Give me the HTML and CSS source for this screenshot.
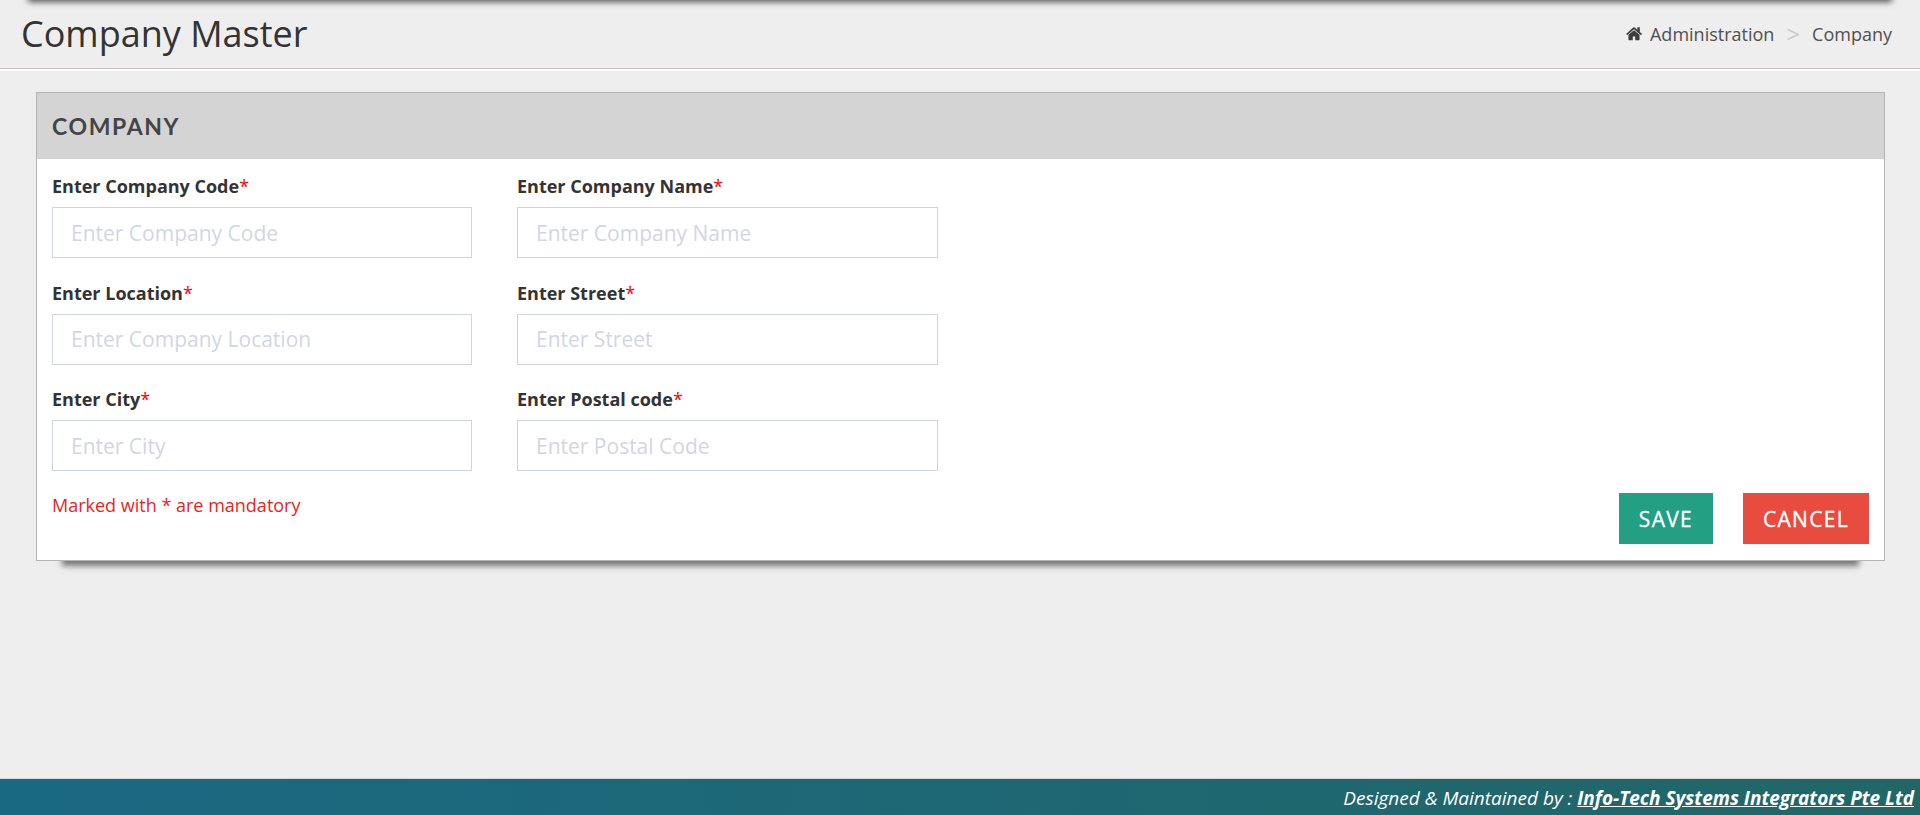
FILE: index.html
```html
<!DOCTYPE html>
<html lang="en">
<head>
<meta charset="utf-8">
<title>Company Master</title>
<link rel="stylesheet" href="styles.css">
</head>
<body>
<div class="topbar"></div>
<header class="page-head">
  <h1 class="page-title">Company Master</h1>
  <nav class="crumbs">
    <svg class="home" viewBox="0 0 1664 1408" aria-hidden="true"><path d="M1408 800v480q0 26-19 45t-45 19H960V960H704v384H320q-26 0-45-19t-19-45V800q0-1 .5-3t.5-3l575-474 575 474q1 2 1 6zm223-69-62 74q-8 9-21 11h-3q-13 0-21-7L832 200 140 809q-12 8-24 7-13-2-21-11l-62-74q-8-10-7-23.500t11-21.500L756 27q32-27 76-27t76 27l272 226V37q0-14 9-23t23-9h192q14 0 23 9t9 23v456l219 182q10 8 11 21.500t-7 23.500z"/></svg>
    <span>Administration</span>
    <span class="sep">&gt;</span>
    <span>Company</span>
  </nav>
</header>
<main class="content">
  <section class="panel">
    <h2 class="panel-head">COMPANY</h2>
    <form class="panel-body">
      <div class="fields">
        <div class="field"><label>Enter Company Code<i>*</i></label><input placeholder="Enter Company Code"></div>
        <div class="field"><label>Enter Company Name<i>*</i></label><input placeholder="Enter Company Name"></div>
        <div class="field"><label>Enter Location<i>*</i></label><input placeholder="Enter Company Location"></div>
        <div class="field"><label>Enter Street<i>*</i></label><input placeholder="Enter Street"></div>
        <div class="field"><label>Enter City<i>*</i></label><input placeholder="Enter City"></div>
        <div class="field"><label>Enter Postal code<i>*</i></label><input placeholder="Enter Postal Code"></div>
      </div>
      <div class="form-foot">
        <p class="note">Marked with * are mandatory</p>
        <div class="actions">
          <button type="button" class="btn save">SAVE</button>
          <button type="button" class="btn cancel">CANCEL</button>
        </div>
      </div>
    </form>
  </section>
</main>
<footer class="site-foot">
  <em>Designed &amp; Maintained by : <a href="#">Info-Tech Systems Integrators Pte Ltd</a></em>
</footer>
</body>
</html>
```
FILE: styles.css
```css
* { box-sizing: border-box; }
html, body { height: 100%; }
body {
  margin: 0;
  background: #eeeeee;
  color: #333;
  font-family: "Open Sans", sans-serif;
  display: flex;
  flex-direction: column;
  overflow: hidden;
  position: relative;
}
.topbar {
  position: absolute;
  top: -10px;
  left: 28px;
  right: 28px;
  height: 10px;
  box-shadow: 0 2px 6px 0 #555;
  background: #555;
}
.page-head {
  height: 69px;
  flex: none;
  display: flex;
  align-items: center;
  justify-content: space-between;
  padding: 0 28px 0 21px;
  border-bottom: 1px solid #c9bfbb;
  box-shadow: 0 2px 0 #fff;
}
.page-title {
  margin: 0;
  font-size: 36px;
  font-weight: 400;
  line-height: 1;
  color: #333;
}
.crumbs {
  display: flex;
  align-items: center;
  font-size: 18px;
  color: #505050;
}
.home { width: 16px; height: 14px; margin-right: 8px; fill: #3d3d3d; }
.sep { color: #ccc; margin: 0 12px; font-size: 24px; line-height: 1; }
.content { flex: 1; padding: 23px 35px 0 36px; }
.panel {
  background: #fff;
  border: 1px solid #b5b5b5;
  box-shadow: 0 31px 6px -26px #777;
  height: 469px;
}
.panel-head {
  margin: 0;
  height: 66px;
  background: #d4d4d4;
  padding: 0 15px 1px;
  display: flex;
  align-items: center;
  font-family: Lato, sans-serif;
  font-size: 23px;
  font-weight: 700;
  letter-spacing: 1.6px;
  color: #444;
}
.panel-body { padding: 15px 15px 0; }
.fields {
  display: grid;
  grid-template-columns: 420px 421px;
  column-gap: 45px;
  row-gap: 22.5px;
}
.field label { display: block; font-size: 18px; font-weight: 700; line-height: 24px; color: #333; margin-bottom: 9px; }
.field i { color: #f00; font-weight: 400; font-style: normal; }
.field input {
  display: block;
  width: 100%;
  height: 51px;
  border: 1px solid #d0d4df;
  padding: 0 18px;
  font: 400 21px "Open Sans", sans-serif;
  background: #fff;
  outline: none;
}
.field input::placeholder { color: #d2d6e2; opacity: 1; }
.form-foot { display: flex; justify-content: space-between; align-items: flex-start; margin-top: 22px; }
.note { margin: 0; color: #f01c1c; font-size: 18px; line-height: 24px; }
.actions { display: flex; gap: 30px; }
.btn {
  border: 0;
  height: 51px;
  padding: 0 20px;
  color: #fff;
  font: 400 21px "Open Sans", sans-serif;
  letter-spacing: 1.3px;
  -webkit-text-stroke: 0.3px #fff;
}
.save { background: #239f84; }
.cancel { background: #e74c3f; }
.site-foot {
  flex: none;
  height: 37px;
  background: linear-gradient(90deg, #1a6983, #226666);
  border-top: 1px solid #d0d5d8;
  color: #fff;
  display: flex;
  align-items: center;
  justify-content: flex-end;
  padding: 1px 6px 0;
  font-size: 19px;
}
.site-foot a { color: #fff; font-weight: 700; }
```
